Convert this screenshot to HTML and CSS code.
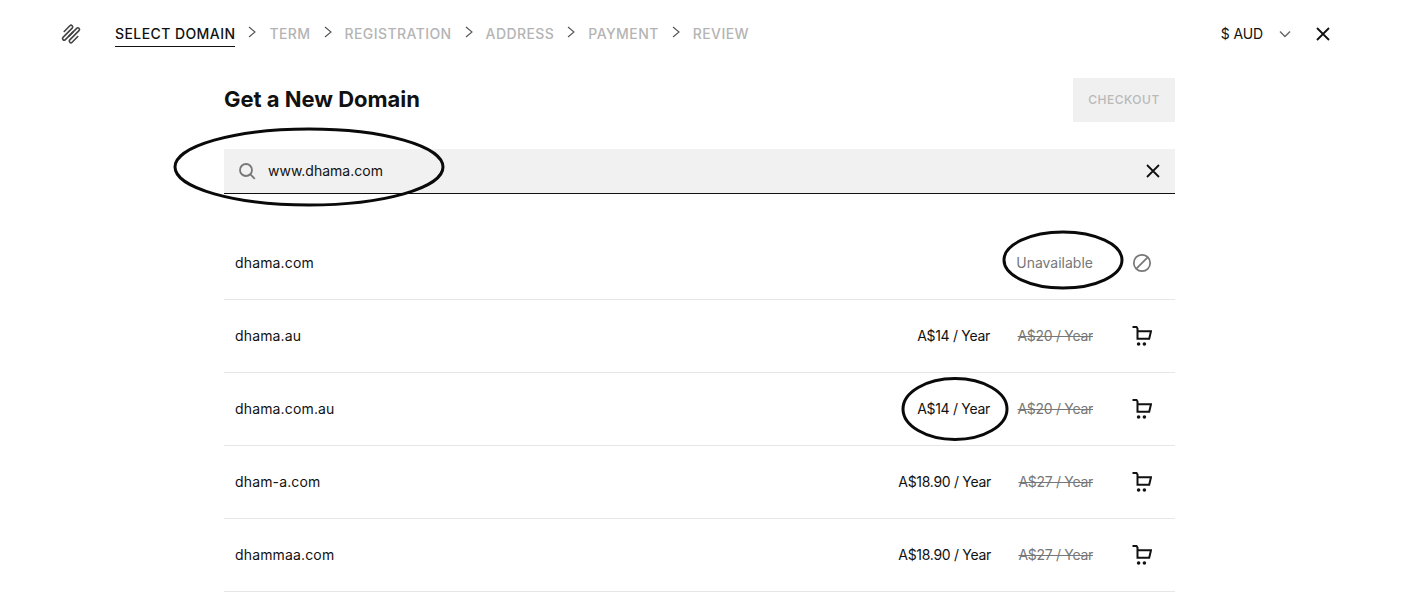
FILE: index.html
```html
<!DOCTYPE html>
<html lang="en">
<head>
<meta charset="utf-8">
<title>Get a New Domain</title>
<link rel="stylesheet" href="styles.css">
</head>
<body>
<header class="topbar">
  <svg class="logo" viewBox="0 0 24 24" width="24" height="24" fill="none" stroke="#444" stroke-width="1.6" stroke-linecap="round">
    <g transform="rotate(-45 12 12)">
      <path d="M9 5.4H17a1.65 1.65 0 0 1 0 3.3H4a1.65 1.65 0 0 0 0 3.3H15"/>
      <path d="M15 18.6H7a1.65 1.65 0 0 1 0-3.3H20a1.65 1.65 0 0 0 0-3.3H9"/>
    </g>
  </svg>
  <nav class="steps">
    <span class="step active">SELECT DOMAIN</span>
    <svg class="chev" viewBox="0 0 10 12" width="10" height="12"><path d="M2 1l6 5-6 5" fill="none" stroke="#555" stroke-width="1.1"/></svg>
    <span class="step">TERM</span>
    <svg class="chev" viewBox="0 0 10 12" width="10" height="12"><path d="M2 1l6 5-6 5" fill="none" stroke="#555" stroke-width="1.1"/></svg>
    <span class="step">REGISTRATION</span>
    <svg class="chev" viewBox="0 0 10 12" width="10" height="12"><path d="M2 1l6 5-6 5" fill="none" stroke="#555" stroke-width="1.1"/></svg>
    <span class="step">ADDRESS</span>
    <svg class="chev" viewBox="0 0 10 12" width="10" height="12"><path d="M2 1l6 5-6 5" fill="none" stroke="#555" stroke-width="1.1"/></svg>
    <span class="step">PAYMENT</span>
    <svg class="chev" viewBox="0 0 10 12" width="10" height="12"><path d="M2 1l6 5-6 5" fill="none" stroke="#555" stroke-width="1.1"/></svg>
    <span class="step">REVIEW</span>
  </nav>
  <div class="top-right">
    <span class="currency">$ AUD</span>
    <svg class="cur-chev" viewBox="0 0 12 8" width="12" height="8"><path d="M1 1.5l5 5 5-5" fill="none" stroke="#666" stroke-width="1.4"/></svg>
    <svg class="close-top" viewBox="0 0 14 14" width="14" height="14"><path d="M1 1l12 12M13 1L1 13" fill="none" stroke="#111" stroke-width="1.8"/></svg>
  </div>
</header>

<main class="content">
  <div class="title-row">
    <h1>Get a New Domain</h1>
    <button class="checkout">CHECKOUT</button>
  </div>
  <div class="search">
    <svg class="search-icon" viewBox="0 0 18 18" width="18" height="18"><circle cx="8" cy="8" r="6" fill="none" stroke="#777" stroke-width="1.8"/><path d="M12.4 12.4l4.4 4.4" stroke="#777" stroke-width="1.8"/></svg>
    <span class="query">www.dhama.com</span>
    <svg class="search-clear" viewBox="0 0 14 14" width="14" height="14"><path d="M1 1l12 12M13 1L1 13" fill="none" stroke="#111" stroke-width="1.8"/></svg>
  </div>
  <ul class="results">
    <li class="row">
      <span class="domain">dhama.com</span>
      <span class="unavailable">Unavailable</span>
      <svg class="row-icon" viewBox="0 0 20 20" width="20" height="20"><circle cx="10" cy="10" r="8.2" fill="none" stroke="#777" stroke-width="1.7"/><path d="M4.4 15.6L15.6 4.4" stroke="#777" stroke-width="1.7"/></svg>
    </li>
    <li class="row">
      <span class="domain">dhama.au</span>
      <span class="price">A$14 / Year</span>
      <span class="old">A$20 / Year</span>
      <svg class="row-icon" viewBox="0 0 20 20" width="20" height="20"><use href="#cart"/></svg>
    </li>
    <li class="row">
      <span class="domain">dhama.com.au</span>
      <span class="price">A$14 / Year</span>
      <span class="old">A$20 / Year</span>
      <svg class="row-icon" viewBox="0 0 20 20" width="20" height="20"><use href="#cart"/></svg>
    </li>
    <li class="row">
      <span class="domain">dham-a.com</span>
      <span class="price wide">A$18.90 / Year</span>
      <span class="old">A$27 / Year</span>
      <svg class="row-icon" viewBox="0 0 20 20" width="20" height="20"><use href="#cart"/></svg>
    </li>
    <li class="row">
      <span class="domain">dhammaa.com</span>
      <span class="price wide">A$18.90 / Year</span>
      <span class="old">A$27 / Year</span>
      <svg class="row-icon" viewBox="0 0 20 20" width="20" height="20"><use href="#cart"/></svg>
    </li>
  </ul>
</main>

<svg class="defs" width="0" height="0">
  <symbol id="cart" viewBox="0 0 20 20">
    <path d="M0.5 1H4.5L5.5 2.5V12.8H17.2L19 5.2H5.5" fill="none" stroke="#111" stroke-width="2"/>
    <circle cx="6.6" cy="18" r="1.8" fill="#111"/>
    <circle cx="12.4" cy="18" r="1.8" fill="#111"/>
  </symbol>
</svg>

<svg class="annotations" width="1402" height="605" viewBox="0 0 1402 605" fill="none" stroke="#0a0a0a" stroke-width="3">
  <ellipse cx="309" cy="167" rx="134" ry="38"/>
  <ellipse cx="1063" cy="260" rx="59" ry="28"/>
  <ellipse cx="955" cy="409" rx="52" ry="30.5"/>
</svg>
</body>
</html>
```
FILE: styles.css
```css
* { box-sizing: border-box; }
html, body { margin: 0; padding: 0; }
body {
  width: 1402px;
  height: 605px;
  overflow: hidden;
  background: #fff;
  color: #111;
  font-family: Inter, "Liberation Sans", sans-serif;
  position: relative;
}
.topbar {
  height: 68px;
  display: flex;
  align-items: center;
  padding-left: 59px;
}
.logo { flex: none; }
.steps {
  display: flex;
  align-items: center;
  margin-left: 32px;
  font-size: 14px;
  font-weight: 500;
  letter-spacing: 0.42px;
  color: #b4b4b4;
}
.step { line-height: 24px; white-space: nowrap; }
.step.active {
  color: #111;
  border-bottom: 1px solid #111;
  height: 25px;
  margin-top: 1px;
}
.chev { margin: -4px 12px 0 12px; flex: none; }
.top-right {
  margin-left: auto;
  padding-right: 72px;
  display: flex;
  align-items: center;
}
.currency { font-size: 14px; letter-spacing: -0.1px; margin-bottom: 1px; }
.cur-chev { margin-left: 16px; }
.close-top { margin-left: 25px; }
.content {
  width: 951px;
  margin-left: 224px;
}
.title-row {
  display: flex;
  align-items: center;
  justify-content: space-between;
  margin-top: 10px;
  height: 44px;
}
h1 {
  margin: 0 0 2px;
  font-size: 22px;
  font-weight: 700;
  letter-spacing: -0.02px;
}
.checkout {
  width: 102px;
  height: 44px;
  border: 0;
  background: #f0f0f0;
  color: #b9b9b9;
  font: 500 12px Inter, "Liberation Sans", sans-serif;
  letter-spacing: 0.5px;
  padding: 0 0 2px;
}
.search {
  margin-top: 27px;
  height: 45px;
  background: #f1f1f1;
  border-bottom: 1px solid #111;
  display: flex;
  align-items: center;
  padding: 0 15px 0 14px;
}
.search-icon { flex: none; margin-bottom: 1px; }
.query { margin-left: 12px; margin-bottom: 1px; font-size: 14px; color: #111; }
.search-clear { margin-left: auto; }
.results {
  list-style: none;
  margin: 33px 0 0;
  padding: 0;
}
.row {
  height: 73px;
  border-bottom: 1px solid #e6e6e6;
  display: flex;
  align-items: center;
  padding: 0 23px 0 11px;
  font-size: 14px;
}
.row span { margin-bottom: 2px; }
.domain { margin-right: auto; letter-spacing: 0.15px; }
.price { white-space: nowrap; letter-spacing: -0.3px; }
.price.wide { margin-right: -1px; }
.old {
  margin-left: 27px;
  width: 76px;
  text-align: right;
  color: #777;
  letter-spacing: -0.3px;
  text-decoration: line-through;
  white-space: nowrap;
}
.unavailable { color: #777; }
.row-icon { margin-left: 39px; flex: none; }
.defs { position: absolute; }
.annotations {
  position: absolute;
  left: 0;
  top: 0;
  pointer-events: none;
}
```
